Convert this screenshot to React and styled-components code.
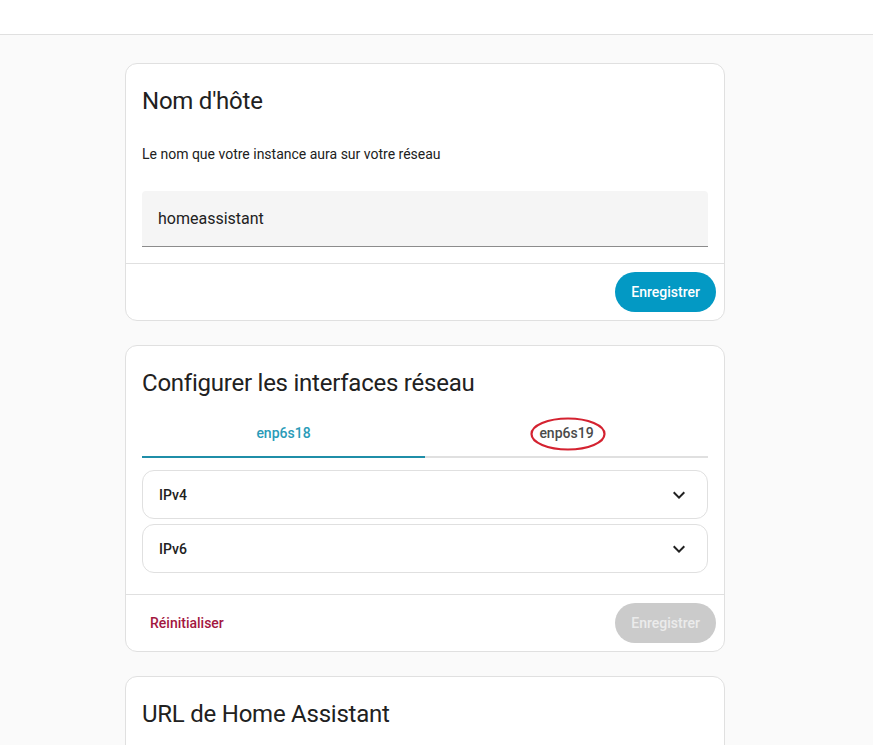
import React, { useState } from "react";
import styled, { createGlobalStyle } from "styled-components";

const GlobalStyle = createGlobalStyle`
  html, body {
    margin: 0;
    padding: 0;
    height: 745px;
    overflow: hidden;
    background: #fafafa;
    font-family: Roboto, "Noto Sans", sans-serif;
    color: #212121;
  }
`;

const Page = styled.div`
  display: flex;
  flex-direction: column;
  height: 745px;
`;

const TopBar = styled.header`
  height: 34px;
  background: #ffffff;
  border-bottom: 1px solid #e0e0e0;
  flex-shrink: 0;
`;

const Content = styled.main`
  padding: 28px 23px 0 0;
  display: flex;
  justify-content: center;
`;

const Column = styled.div`
  width: 600px;
  display: flex;
  flex-direction: column;
  gap: 24px;
`;

const Card = styled.section`
  background: #ffffff;
  border: 1px solid #e0e0e0;
  border-radius: 12px;
`;

const CardHeader = styled.h1`
  margin: 0;
  padding: 13px 16px ${(props) => (props.tight ? "0" : "15px")};
  font-size: 24px;
  font-weight: 400;
  line-height: 48px;
  letter-spacing: -0.01em;
`;

const CardContent = styled.div`
  padding: 0 16px ${(props) => props.bottom || "16px"};
`;

const Description = styled.p`
  margin: 4px 0 27px;
  font-size: 14px;
  line-height: 20px;
`;

const TextField = styled.div`
  height: 55px;
  background: #f5f5f5;
  border-bottom: 1px solid #8c8c8c;
  border-radius: 4px 4px 0 0;
  display: flex;
  align-items: center;
  padding: 0 16px;
  font-size: 16px;
  color: #212121;
`;

const CardActions = styled.div`
  border-top: 1px solid #e0e0e0;
  padding: 8px;
  display: flex;
  justify-content: ${(props) => (props.split ? "space-between" : "flex-end")};
  align-items: center;
`;

const Button = styled.button`
  height: 40px;
  border: none;
  border-radius: 20px;
  padding: 0 16px;
  font-family: Roboto, sans-serif;
  font-size: 14px;
  font-weight: 500;
  background: ${(props) => (props.disabled ? "#cbcbcb" : "#0399c4")};
  color: ${(props) => (props.disabled ? "#ebebeb" : "#ffffff")};
`;

const TextButton = styled.button`
  height: 40px;
  border: none;
  background: none;
  padding: 0 16px;
  font-family: Roboto, sans-serif;
  font-size: 14px;
  font-weight: 500;
  color: #a3173f;
`;

const Tabs = styled.div`
  display: flex;
  margin: 3px 0 12px;
`;

const Tab = styled.div`
  position: relative;
  flex: 1;
  height: 46px;
  display: flex;
  align-items: center;
  justify-content: center;
  font-size: 14px;
  font-weight: 500;
  color: ${(props) => (props.active ? "#2a9bb8" : "#4a4a4a")};
  border-bottom: 2px solid ${(props) => (props.active ? "#1f8ea8" : "#e0e0e0")};
`;

const Mark = styled.svg`
  position: absolute;
  left: 50%;
  top: 50%;
  width: 80px;
  height: 38px;
  transform: translate(-38px, -17px);
  pointer-events: none;
`;

const Panel = styled.div`
  height: 47px;
  border: 1px solid #e0e0e0;
  border-radius: 12px;
  display: flex;
  align-items: center;
  justify-content: space-between;
  padding: 0 16px;
  font-size: 14px;
  font-weight: 500;
  & + & {
    margin-top: 5px;
  }
`;

const Chevron = () => (
  <svg width="24" height="24" viewBox="0 0 24 24">
    <path
      fill="#212121"
      d="M7.41 8.59 12 13.17l4.59-4.58L18 10l-6 6-6-6 1.41-1.41z"
    />
  </svg>
);

const App = () => {
  const [tab, setTab] = useState(0);
  const ifaces = ["enp6s18", "enp6s19"];

  return (
    <Page>
      <GlobalStyle />
      <TopBar />
      <Content>
        <Column>
          <Card>
            <CardHeader>Nom d'hôte</CardHeader>
            <CardContent>
              <Description>
                Le nom que votre instance aura sur votre réseau
              </Description>
              <TextField>homeassistant</TextField>
            </CardContent>
            <CardActions>
              <Button>Enregistrer</Button>
            </CardActions>
          </Card>

          <Card>
            <CardHeader tight>Configurer les interfaces réseau</CardHeader>
            <CardContent bottom="21px">
              <Tabs>
                {ifaces.map((name, i) => (
                  <Tab key={name} active={tab === i} onClick={() => setTab(i)}>
                    {name}
                    {i === 1 && (
                      <Mark viewBox="0 0 80 38">
                        <ellipse
                          cx="39"
                          cy="18"
                          rx="36.5"
                          ry="15.5"
                          fill="none"
                          stroke="#d42230"
                          strokeWidth="2.2"
                        />
                      </Mark>
                    )}
                  </Tab>
                ))}
              </Tabs>
              <Panel>
                IPv4
                <Chevron />
              </Panel>
              <Panel>
                IPv6
                <Chevron />
              </Panel>
            </CardContent>
            <CardActions split>
              <TextButton>Réinitialiser</TextButton>
              <Button disabled>Enregistrer</Button>
            </CardActions>
          </Card>

          <Card>
            <CardHeader>URL de Home Assistant</CardHeader>
            <CardContent bottom="120px" />
          </Card>
        </Column>
      </Content>
    </Page>
  );
};

export default App;
